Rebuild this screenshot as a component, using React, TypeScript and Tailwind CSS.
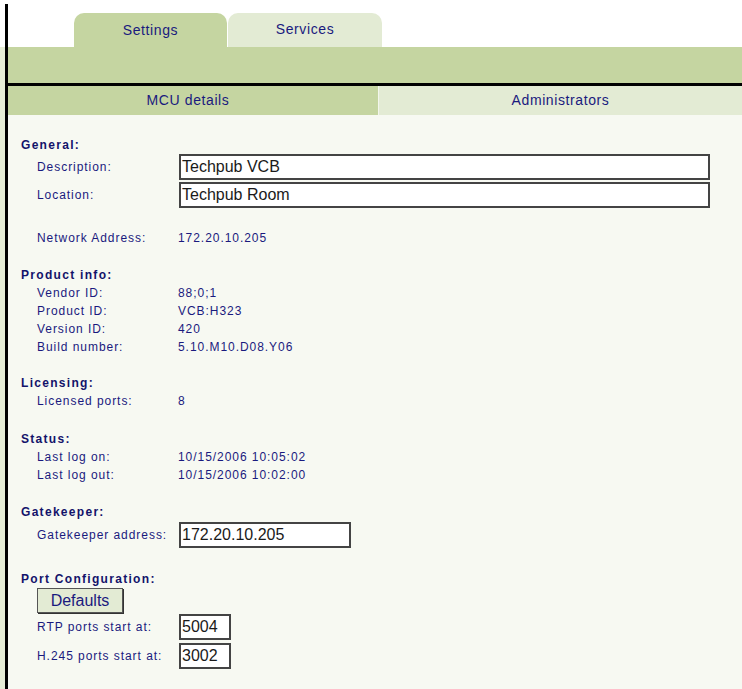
const font = { fontFamily: '"Liberation Sans", Arial, sans-serif' };

type Row = { label: string; value: string };

const productInfo: Row[] = [
  { label: "Vendor ID:", value: "88;0;1" },
  { label: "Product ID:", value: "VCB:H323" },
  { label: "Version ID:", value: "420" },
  { label: "Build number:", value: "5.10.M10.D08.Y06" },
];

const status: Row[] = [
  { label: "Last log on:", value: "10/15/2006 10:05:02" },
  { label: "Last log out:", value: "10/15/2006 10:02:00" },
];

const Heading = ({ children, className = "" }: { children: React.ReactNode; className?: string }) => (
  <div className={`pl-[13px] text-[12px] leading-[18px] font-bold tracking-[1.3px] text-[#13136a] ${className}`}>
    {children}
  </div>
);

const TextRow = ({ label, value }: Row) => (
  <div className="flex h-[18px] items-center pl-[29px] text-[12px] tracking-[0.95px] text-[#1a1a7e]">
    <span className="w-[141px] shrink-0">{label}</span>
    <span>{value}</span>
  </div>
);

const Field = ({ label, value, width, className = "" }: { label: string; value: string; width: string; className?: string }) => (
  <div className={`flex items-center pl-[29px] ${className}`}>
    <span className="w-[142px] shrink-0 text-[12px] tracking-[0.95px] text-[#1a1a7e]">{label}</span>
    <input
      readOnly
      value={value}
      style={font}
      className={`${width} h-[26px] border-2 border-[#444444] bg-white pl-[1px] text-[16px] text-[#1a1a1a] outline-none`}
    />
  </div>
);

export default function App() {
  return (
    <div style={font} className="flex h-[689px] w-[742px] overflow-hidden bg-white">
      {/* left gutter + frame line */}
      <div className="flex w-[5px] flex-col">
        <div className="h-[47px] bg-white" />
        <div className="flex-1 bg-[#e6edd6]" />
      </div>
      <div className="mt-[4px] w-[3px] bg-black" />

      <div className="flex flex-1 flex-col">
        {/* top tabs */}
        <div className="flex h-[47px] items-end gap-[1px] pl-[66px]">
          <div className="flex h-[34px] w-[153px] items-center justify-center rounded-t-[10px] bg-[#c5d5a1] text-[14px] tracking-[0.6px] text-[#1a1a7e]">
            Settings
          </div>
          <div className="flex h-[34px] w-[154px] items-center justify-center rounded-t-[10px] bg-[#e3ebd4] pb-[2px] text-[14px] tracking-[0.6px] text-[#1a1a7e]">
            Services
          </div>
        </div>
        <div className="h-[36px] bg-[#c5d5a1]" />
        <div className="h-[3px] bg-black" />

        {/* sub tabs */}
        <div className="flex h-[29px] text-[14px] tracking-[0.6px] text-[#1a1a7e]">
          <div className="flex w-[370px] items-center justify-center bg-[#c5d5a1] pr-[10px]">MCU details</div>
          <div className="w-[1px] bg-[#f3f6ec]" />
          <div className="flex flex-1 items-center justify-center bg-[#e3ebd4]">Administrators</div>
        </div>

        {/* details */}
        <div className="flex-1 bg-[#f7f9f2] pt-[21px]">
          <Heading>General:</Heading>
          <Field label="Description:" value="Techpub VCB" width="w-[531px]" />
          <Field label="Location:" value="Techpub Room" width="w-[531px]" className="mt-[2px]" />
          <div className="mt-[21px]">
            <TextRow label="Network Address:" value="172.20.10.205" />
          </div>

          <Heading className="mt-[19px]">Product info:</Heading>
          {productInfo.map((r) => (
            <TextRow key={r.label} {...r} />
          ))}

          <Heading className="mt-[18px]">Licensing:</Heading>
          <TextRow label="Licensed ports:" value="8" />

          <Heading className="mt-[20px]">Status:</Heading>
          {status.map((r) => (
            <TextRow key={r.label} {...r} />
          ))}

          <Heading className="mt-[19px]">Gatekeeper:</Heading>
          <Field label="Gatekeeper address:" value="172.20.10.205" width="w-[172px]" className="mt-[1px]" />

          <Heading className="mt-[22px]">Port Configuration:</Heading>
          <div className="pl-[29px]">
            <button
              style={font}
              className="h-[25px] w-[86px] border border-[#555555] bg-[#e3ebd4] text-[16px] text-[#1a1a7e] shadow-[1px_1px_0_#333333]"
            >
              Defaults
            </button>
          </div>
          <Field label="RTP ports start at:" value="5004" width="w-[52px]" className="mt-[1px]" />
          <Field label="H.245 ports start at:" value="3002" width="w-[52px]" className="mt-[3px]" />
        </div>
      </div>
    </div>
  );
}
